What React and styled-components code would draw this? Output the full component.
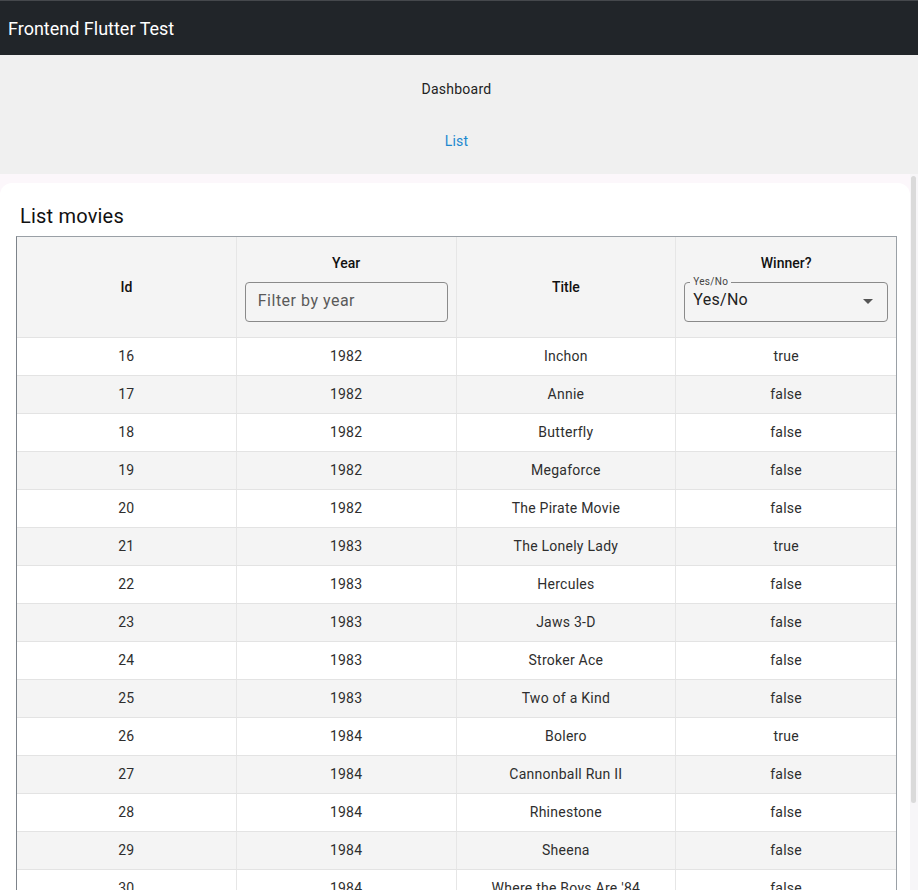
import React, { useState } from 'react';
import styled, { createGlobalStyle } from 'styled-components';

const GlobalStyle = createGlobalStyle`
  html, body {
    margin: 0;
    padding: 0;
    height: 100%;
    overflow: hidden;
    font-family: Roboto, "Liberation Sans", sans-serif;
  }
`;

const Page = styled.div`
  display: flex;
  flex-direction: column;
  height: 890px;
  background: #f0f0f0;
`;

const AppBar = styled.header`
  height: 54px;
  flex-shrink: 0;
  display: flex;
  align-items: center;
  padding: 0 8px;
  background: #212529;
  border-top: 1px solid #45484c;
  color: #ffffff;
  font-size: 18px;
`;

const Nav = styled.nav`
  display: flex;
  flex-direction: column;
  align-items: center;
  height: 119px;
  flex-shrink: 0;
  padding-right: 5px;
`;

const NavItem = styled.div`
  height: ${(p) => (p.$active ? '36px' : '68px')};
  display: flex;
  align-items: center;
  justify-content: center;
  font-size: 14px;
  letter-spacing: 0.25px;
  color: ${(p) => (p.$active ? '#1c88cf' : '#222')};
`;

const ScrollArea = styled.div`
  flex: 1;
  min-height: 0;
  display: flex;
  background: #fcf7fb;
`;

const Content = styled.div`
  flex: 1;
  overflow: hidden;
`;

const ScrollTrack = styled.div`
  width: 8px;
  flex-shrink: 0;
  background: #f7f6f8;
  padding: 2px 2px 0 1px;
  box-sizing: border-box;
`;

const Thumb = styled.div`
  height: 627px;
  background: #dadada;
  border-radius: 3px;
`;

const Card = styled.section`
  margin-top: 9px;
  background: #ffffff;
  border-radius: 12px 12px 0 0;
  padding: 21px 13px 40px 16px;
`;

const Heading = styled.h2`
  margin: 0 0 8px 4px;
  font-size: 20px;
  font-weight: 400;
  letter-spacing: 0.2px;
  color: #111;
  line-height: 24px;
`;

const Table = styled.div`
  border: 1px solid #9aa0a6;
  border-left-color: #7d838a;
`;

const Row = styled.div`
  display: grid;
  grid-template-columns: repeat(4, minmax(0, 1fr));
  height: ${(p) => (p.$header ? '101px' : '38px')};
  background: ${(p) => (p.$shaded ? '#f4f4f4' : '#ffffff')};
  border-bottom: 1px solid #e3e3e3;
  box-sizing: border-box;
`;

const Cell = styled.div`
  display: flex;
  flex-direction: column;
  align-items: stretch;
  justify-content: center;
  text-align: center;
  font-size: 14px;
  letter-spacing: 0.25px;
  color: #2e2e2e;
  border-right: 1px solid #e6e6e6;
  padding: ${(p) => (p.$field ? '2px 8px 0' : '0 8px 1px')};
  min-width: 0;
  &:last-child {
    border-right: none;
  }
`;

const HeadLabel = styled.div`
  font-size: 14px;
  font-weight: 500;
  letter-spacing: 0;
  color: #111;
  margin-bottom: ${(p) => (p.$withField ? '11px' : '0')};
`;

const FilterInput = styled.input`
  width: 100%;
  height: 40px;
  box-sizing: border-box;
  border: 1px solid #8a8a8a;
  border-radius: 4px;
  background: transparent;
  padding: 0 12px 2px;
  font-family: Roboto, "Liberation Sans", sans-serif;
  font-size: 16px;
  letter-spacing: 0.5px;
  color: #333;
  outline: none;
  &::placeholder {
    color: #5a5a5a;
  }
`;

const SelectBox = styled.div`
  position: relative;
  height: 40px;
  box-sizing: border-box;
  border: 1px solid #8a8a8a;
  border-radius: 4px;
  display: flex;
  align-items: center;
  justify-content: space-between;
  padding: 0 14px 4px 8px;
  font-size: 16px;
  letter-spacing: 0.3px;
  color: #222;
`;

const FloatLabel = styled.span`
  position: absolute;
  top: -7px;
  left: 5px;
  padding: 0 3px;
  font-size: 10px;
  line-height: 12px;
  color: #444;
  background: #f4f4f4;
`;

const Arrow = styled.span`
  margin-top: 4px;
  width: 0;
  height: 0;
  border-left: 5px solid transparent;
  border-right: 5px solid transparent;
  border-top: 5px solid #555;
`;

const Pager = styled.div`
  height: 60px;
`;

const movies = [
  [16, 1982, 'Inchon', true],
  [17, 1982, 'Annie', false],
  [18, 1982, 'Butterfly', false],
  [19, 1982, 'Megaforce', false],
  [20, 1982, 'The Pirate Movie', false],
  [21, 1983, 'The Lonely Lady', true],
  [22, 1983, 'Hercules', false],
  [23, 1983, 'Jaws 3-D', false],
  [24, 1983, 'Stroker Ace', false],
  [25, 1983, 'Two of a Kind', false],
  [26, 1984, 'Bolero', true],
  [27, 1984, 'Cannonball Run II', false],
  [28, 1984, 'Rhinestone', false],
  [29, 1984, 'Sheena', false],
  [30, 1984, "Where the Boys Are '84", false],
];

export default function App() {
  const [year, setYear] = useState('');

  return (
    <Page>
      <GlobalStyle />
      <AppBar>Frontend Flutter Test</AppBar>
      <Nav>
        <NavItem>Dashboard</NavItem>
        <NavItem $active>List</NavItem>
      </Nav>
      <ScrollArea>
        <Content>
          <Card>
            <Heading>List movies</Heading>
            <Table>
              <Row $header $shaded>
                <Cell>
                  <HeadLabel>Id</HeadLabel>
                </Cell>
                <Cell $field>
                  <HeadLabel $withField>Year</HeadLabel>
                  <FilterInput
                    placeholder="Filter by year"
                    value={year}
                    onChange={(e) => setYear(e.target.value)}
                  />
                </Cell>
                <Cell>
                  <HeadLabel>Title</HeadLabel>
                </Cell>
                <Cell $field>
                  <HeadLabel $withField>Winner?</HeadLabel>
                  <SelectBox>
                    <FloatLabel>Yes/No</FloatLabel>
                    Yes/No
                    <Arrow />
                  </SelectBox>
                </Cell>
              </Row>
              {movies.map(([id, y, title, winner], i) => (
                <Row key={id} $shaded={i % 2 === 1}>
                  <Cell>{id}</Cell>
                  <Cell>{y}</Cell>
                  <Cell>{title}</Cell>
                  <Cell>{String(winner)}</Cell>
                </Row>
              ))}
            </Table>
            <Pager />
          </Card>
        </Content>
        <ScrollTrack>
          <Thumb />
        </ScrollTrack>
      </ScrollArea>
    </Page>
  );
}
